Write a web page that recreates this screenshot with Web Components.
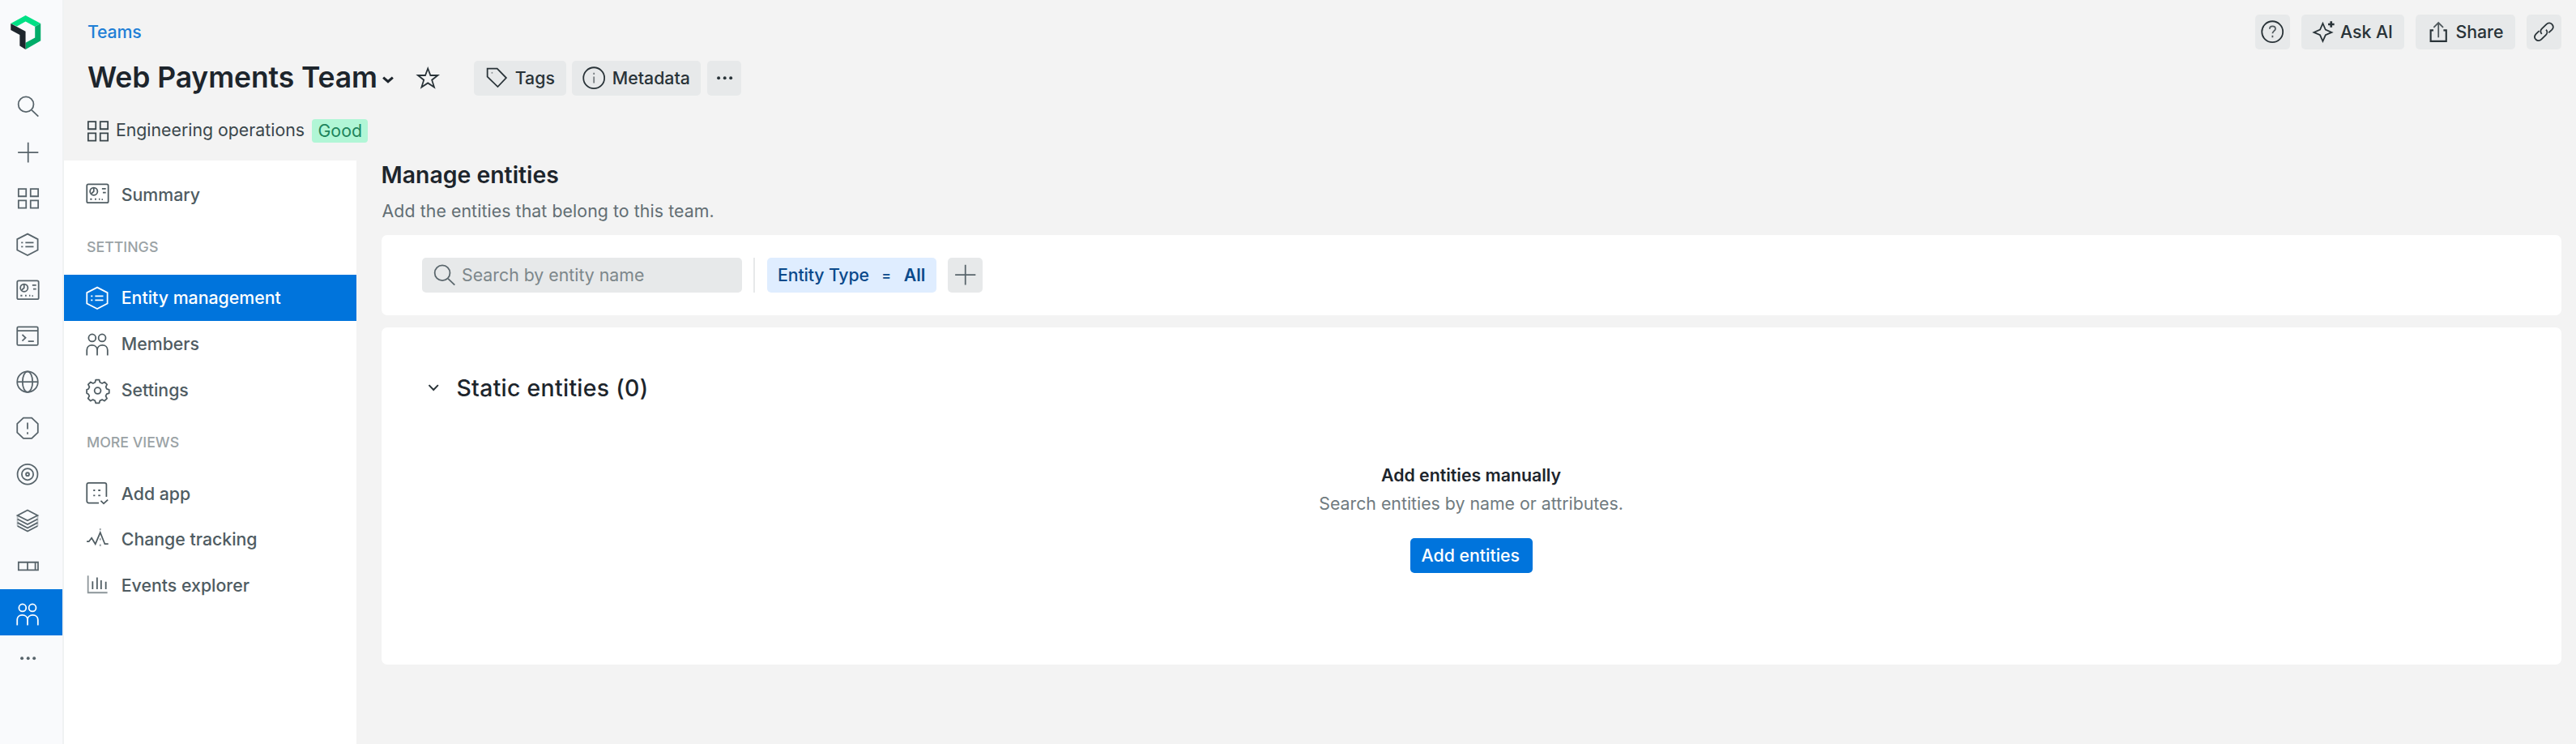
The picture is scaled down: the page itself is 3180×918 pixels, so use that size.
<!DOCTYPE html>
<html lang="en">
<head>
<meta charset="utf-8">
<title>Web Payments Team</title>
<style>
html,body{margin:0;height:100%}
body{font-family:Inter,"Liberation Sans",sans-serif;font-size:21.3px;color:#293338;background:#f3f3f3;overflow:hidden}
</style>
</head>
<body>
<team-app></team-app>
<script>
const ICONS={
logo:`<g stroke="none"><path fill="#00e085" d="M0 5.1 9.4 0l9.6 5.1-3.7 2-5.9-3.2-5.5 3.1z"/><path fill="#00ac69" d="M19 5.1v11L9.4 21.6v-4.3l6-3.2v-7z"/><path fill="#1d252c" d="M0 5.1v4.1l5.7 3.2v6.9l3.7 2.3V10.2z"/></g>`,
search:`<circle cx="6.8" cy="6.6" r="5.3"/><path d="m10.8 10.6 4.6 4.4"/>`,
plus:`<path d="M8.3 1v14M1.2 8h14.2"/>`,
grid:`<path d="M1.6 1.7h5.3v5.2H1.6zM10 1.7h5.3v5.2H10zM1.6 9.8h5.3V15H1.6zM10 9.8h5.3V15H10z"/>`,
hex:`<path d="M7.9.9.7 4.6v7.5l7.2 3.7 7.1-3.7V4.6zM6.4 7h5.7M6.4 9.8h5.7M3.5 7h1.2M3.5 9.8h1.2"/>`,
dash:`<rect x=".7" y="1.4" width="14.9" height="12.8" rx="1"/><circle cx="5.5" cy="6.3" r="2.6"/><path d="M5.5 3.7v2.6L3.7 8M11.2 4.5h2.7M11.8 7.1h2.1M3 11.7h1.2M6.2 11.7h1M9 11.7h.8M11 11.9h.8"/>`,
term:`<rect x=".7" y="1.3" width="14.4" height="12.7" rx=".8"/><path d="M.7 4h14.4M4.2 6.7l2.3 2.2-2.3 2.2M8.3 11.4h4"/>`,
globe:`<circle cx="7.9" cy="8" r="7.2"/><ellipse cx="7.9" cy="8" rx="3.5" ry="7.2"/><path d="M.7 8h14.4"/>`,
alert:`<path d="M5 .9h5.8L15.1 5v6l-4.3 4.2H5L.7 11V5zM7.9 4.2v4.6M7.9 10.8v1.5"/>`,
target:`<circle cx="7.9" cy="8" r="7"/><circle cx="7.9" cy="8" r="4"/><circle cx="7.9" cy="8" r="1.1"/>`,
layers:`<path d="m7.9.8 7 3.7-7 3.6-7-3.6zM.9 7l7 3.7L14.9 7M.9 9.5l7 3.7 7-3.7M.9 11.8l7 3.7 7-3.7"/><path d="M.9 4.5v7.3M14.9 4.5v7.3" stroke-opacity=".4"/>`,
book:`<path d="M1.6 5.5h13.6v5.4H1.6zM7.9 5.5v5.4M13.3 5.5v5.4"/>`,
people:`<circle cx="4.4" cy="3.9" r="2.5"/><circle cx="11.3" cy="3.9" r="2.5"/><path d="M.7 16v-3.6c0-2 1.4-3.4 3.5-3.4S7.9 10.4 7.9 12.4V16M7.9 12.4C7.9 10.4 9.4 9 11.5 9s3.6 1.4 3.6 3.4V16"/>`,
dots:`<g fill="currentColor" stroke="none"><circle cx="4" cy="8" r="1.1"/><circle cx="8.3" cy="8" r="1.1"/><circle cx="12.5" cy="8" r="1.1"/></g>`,
gear:`<path d="M6.9.9h2.4l.5 1.8 1.5.7 1.7-.9 1.7 1.7-.8 1.7.6 1.4 1.7.5v2.4l-1.7.6-.7 1.4.9 1.7-1.7 1.7-1.7-.9-1.5.7-.5 1.7H6.9l-.6-1.7-1.4-.7-1.7.9-1.7-1.7.9-1.7-.7-1.4L.6 10.2V7.8l1.2-.5.7-1.4-.9-1.7 1.7-1.7 1.7.9 1.4-.7z" stroke-linejoin="round"/><circle cx="8.2" cy="8.5" r="2.2"/>`,
app:`<path d="M9 15H2C1.2 15 .7 14.5.7 13.7V2.3C.7 1.5 1.2 1 2 1h11c.8 0 1.3.5 1.3 1.3v8.4M10.4 13.5l2 1.9 2.9-2.7"/><path d="M5.2 6.2h1.2M8.6 6.2h1.5M5.2 9.8h1.2M8.6 9.8h1.5"/>`,
change:`<path d="M.6 9.7h1.5L4 7.2l2.6 4.2 3.4-8 3.2 8h2.4"/><path d="M10 .6v1.2M10 7.5v1.2M10 11.5v1.4" stroke-opacity=".6"/>`,
bars:`<path d="M1.5 1.2v11.9h13.5" stroke-opacity=".65"/><path d="M4.7 5.2v5.5M7.8 2.5v8.2M10.6 4.5v6.2M13.9 5.5v5.2"/>`,
star:`<path d="m8 1.4 1.8 4.8h5.1l-4.1 3.2 1.6 5L8 11.5l-4.4 2.9 1.6-5L1.1 6.2h5.1z"/>`,
tag:`<path d="M1.5 1.5h6.8l6.3 6.4-5.9 6.2-7.2-7z"/><path d="M4.3 4.4h.9" stroke-opacity=".5"/>`,
info:`<circle cx="8" cy="8" r="7.3"/><path d="M8 7v4.6M8 4.3v1.3" stroke-opacity=".6"/>`,
help:`<circle cx="8" cy="8" r="7.3"/><path d="M6.1 6.1c0-1.2.8-1.9 2-1.9s2 .7 2 1.8c0 1.3-2 1.5-2 3.2M8.1 10.6v1.4" stroke-opacity=".8"/>`,
spark:`<path d="m7 2.2 1.9 4.3 4.3 1.9-4.3 1.9L7 14.6l-1.9-4.3L.8 8.4l4.3-1.9z"/><path stroke-width="1.5" d="M12.8.7v4.2M10.7 2.8H15"/>`,
share:`<path stroke-width="1.2" d="M4.5 7H2.6v7.6h10.8V7h-1.9"/><path d="M8 12V1.8M4.7 5 8 1.7 11.3 5" stroke-opacity=".8"/>`,
link:`<path d="M6.6 9.6c-1-1.2-.9-2.7.1-3.7l3.2-3.1c1.1-1.1 2.7-1.1 3.8-.1 1 1.1 1 2.7 0 3.8l-2.3 2.2M9.6 6.5c1 1.1.9 2.7-.1 3.7l-3.2 3.1c-1.1 1.1-2.7 1.1-3.8.1-1-1.1-1-2.7 0-3.8l2.3-2.2"/>`,
caret:`<path stroke-width="2" d="m4.1 5.700 3.900 3.400L11.900 5.700"/>`,
chevron:`<path stroke-width="1.1" d="m4.8 6.300 3.200 3.300 3.200-3.300"/>`
};
function define(name,css,html){
  customElements.define(name,class extends HTMLElement{
    constructor(){super();const t=document.createElement('template');
      t.innerHTML=`<style>*{box-sizing:border-box}${css}</style>${html}`;
      this.attachShadow({mode:'open'}).append(t.content.cloneNode(true));}
  });
}
customElements.define('ui-icon',class extends HTMLElement{
  connectedCallback(){
    if(this.shadowRoot)return;
    const n=this.getAttribute('name');
    this.attachShadow({mode:'open'}).innerHTML=`<style>:host{display:block;flex:none;width:28.4px;height:28.4px}svg{display:block;width:100%;height:100%;overflow:visible}</style><svg viewBox="${n==='logo'?'0 0 19 21.6':'0 0 16 16'}" fill="none" stroke="currentColor" stroke-width="1">${ICONS[n]}</svg>`;
  }
});
define('rail-item',`:host{display:flex;align-items:center;height:56.77px;padding-left:19.5px;color:#58646b}:host([active]){background:#0074dc;color:#fff}:host([active]) ::slotted(*){margin-top:3px}`,`<slot></slot>`);
define('app-rail',`:host{display:block;width:79px;flex:none;background:#f9fafc;border-right:2.5px solid #f0f2f3;box-sizing:border-box}.logo{width:37.5px;height:42px;margin:18.5px 0 42.1px 13px}`,
`<ui-icon class="logo" name="logo"></ui-icon>${['search','plus','grid','hex','dash','term','globe','alert','target','layers','book'].map(n=>`<rail-item><ui-icon name="${n}"></ui-icon></rail-item>`).join('')}<rail-item active><ui-icon name="people"></ui-icon></rail-item><rail-item><ui-icon name="dots"></ui-icon></rail-item>`);
define('ui-button',`:host{display:flex;align-items:center;box-sizing:border-box;height:42.5px;border-radius:5px;background:#e7e9ea;color:#293338;font-weight:500;white-space:nowrap;padding-left:14px;gap:8.5px}:host([square]){width:42.5px;padding:0;justify-content:center}:host([primary]){background:#0074dc;color:#fff}`,`<slot name="icon"></slot><slot></slot>`);
define('nav-item',`:host{display:flex;align-items:center;height:56.77px;padding:0 0 1px 27px;box-sizing:border-box;gap:15.4px;font-weight:500;color:#4f5c62;white-space:nowrap}:host([active]){background:#0074dc;color:#fff}`,`<slot name="icon"></slot><slot></slot>`);
define('nav-heading',`:host{display:flex;align-items:center;height:71px;padding:1px 0 0 28px;box-sizing:border-box;font-size:17.75px;font-weight:500;color:#9aa2a5;white-space:nowrap}`,`<slot></slot>`);
define('side-nav',`:host{display:block;width:361.3px;flex:none;background:#fff;padding-top:14.2px;box-sizing:border-box}`,
`<nav-item><ui-icon slot="icon" name="dash"></ui-icon>Summary</nav-item>
<nav-heading>SETTINGS</nav-heading>
<nav-item active><ui-icon slot="icon" name="hex"></ui-icon>Entity management</nav-item>
<nav-item><ui-icon slot="icon" name="people"></ui-icon>Members</nav-item>
<nav-item><ui-icon slot="icon" name="gear"></ui-icon>Settings</nav-item>
<nav-heading>MORE VIEWS</nav-heading>
<nav-item><ui-icon slot="icon" name="app"></ui-icon>Add app</nav-item>
<nav-item><ui-icon slot="icon" name="change"></ui-icon>Change tracking</nav-item>
<nav-item><ui-icon slot="icon" name="bars"></ui-icon>Events explorer</nav-item>`);
define('status-badge',`:host{display:flex;align-items:center;justify-content:center;box-sizing:border-box;width:68.5px;height:28.4px;border-radius:4px;background:#b1f6d6;color:#20845c}`,`<slot></slot>`);
define('page-header',`:host{display:flex;justify-content:space-between;height:197.5px;box-sizing:border-box;padding:18px 18.5px 0 29px;flex:none}
.crumb{height:43px;line-height:43px;color:#1f7fd6;font-weight:500;letter-spacing:-.2px}
.title,.meta,.right{display:flex;align-items:center}
.title{height:42.5px;margin-top:14px}h1{margin:-1px 0 0;font-size:35.5px;font-weight:600;color:#1d252c;line-height:42px;white-space:nowrap;letter-spacing:-.09px}
.caret{width:24px;height:24px;margin:5px 0 0 1.5px;color:#1d252c}.star{margin:0 42.5px 0 23px}
.tags{width:114px;margin-right:6.5px;gap:8px}.md{width:159.5px;margin-right:7.5px;padding-left:13px}
.meta{margin-top:23px;height:42px;color:#3a464b}.meta ui-icon{margin-left:-1.7px}.meta span{margin:-3px 9.5px 0 8.2px;white-space:nowrap}
.right{height:42.5px;gap:14px}.ask{width:127.5px;gap:6px}.share{width:123px;gap:7px}`,
`<div><div class="crumb"><span>Teams</span></div>
<div class="title"><h1>Web Payments Team</h1><ui-icon class="caret" name="caret"></ui-icon><ui-icon class="star" name="star"></ui-icon>
<ui-button class="tags"><ui-icon slot="icon" name="tag"></ui-icon>Tags</ui-button><ui-button class="md"><ui-icon slot="icon" name="info"></ui-icon>Metadata</ui-button><ui-button square><ui-icon slot="icon" name="dots"></ui-icon></ui-button></div>
<div class="meta"><ui-icon name="grid"></ui-icon><span>Engineering operations</span><status-badge>Good</status-badge></div></div>
<div class="right"><ui-button square><ui-icon slot="icon" name="help"></ui-icon></ui-button><ui-button class="ask"><ui-icon slot="icon" name="spark"></ui-icon>Ask AI</ui-button><ui-button class="share"><ui-icon slot="icon" name="share"></ui-icon>Share</ui-button><ui-button square><ui-icon slot="icon" name="link"></ui-icon></ui-button></div>`);
define('ui-card',`:host{display:block;box-sizing:border-box;background:#fff;border-radius:7px}`,`<slot></slot>`);
define('search-field',`:host{display:flex;align-items:center;box-sizing:border-box;width:395px;height:42.5px;border-radius:5px;background:#e7e9ea;padding-left:13.5px;gap:7.6px;color:#7d878b}ui-icon{color:#5a666c}`,`<ui-icon name="search"></ui-icon><span>Search by entity name</span>`);
define('filter-chip',`:host{display:flex;align-items:center;box-sizing:border-box;width:209.5px;height:42.5px;border-radius:5px;background:#dfedff;padding-left:13.5px;color:#0b4a8b;white-space:nowrap;font-weight:500}.k{letter-spacing:-.15px}.op{margin:0 15.5px;font-size:17.75px}.v{font-weight:600}`,`<span class="k">Entity Type</span><span class="op">=</span><span class="v">All</span>`);
define('empty-state',`:host{display:flex;flex-direction:column;align-items:center}b{font-weight:600;color:#1d252c;line-height:28.4px}p{margin:7px 0 0;line-height:28.4px;color:#707b80}ui-button{width:151px;margin-top:28.5px}`,`<b>Add entities manually</b><p>Search entities by name or attributes.</p><ui-button primary>Add entities</ui-button>`);
define('entity-manager',`:host{display:block;flex:1;padding:.5px 18.5px 0 30.3px;box-sizing:border-box}
h2,h3{margin:0;font-size:28.4px;font-weight:600;color:#1d252c;line-height:36px;white-space:nowrap}h3{font-weight:500;letter-spacing:.3px}
p{margin:12.1px 0 0 1px;line-height:28.4px;color:#626e73;letter-spacing:.08px}
.filters{display:flex;align-items:center;height:98.5px;padding-left:50px;margin-top:15.5px}.sep{width:2px;height:42.5px;background:#e7e9ea;margin:0 14.5px}
.list{height:415.5px;margin-top:15.5px;padding-top:56.5px}.head{display:flex;align-items:center;padding-left:50px;gap:14.5px}.add{margin-left:14px;color:#58646b}empty-state{margin-top:75.2px}`,
`<h2>Manage entities</h2><p>Add the entities that belong to this team.</p>
<ui-card class="filters"><search-field></search-field><div class="sep"></div><filter-chip></filter-chip><ui-button class="add" square><ui-icon slot="icon" name="plus"></ui-icon></ui-button></ui-card>
<ui-card class="list"><div class="head"><ui-icon name="chevron"></ui-icon><h3>Static entities (0)</h3></div><empty-state></empty-state></ui-card>`);
define('team-app',`:host{display:flex;height:918px}.main{flex:1;display:flex;flex-direction:column;min-width:0}.body{display:flex;flex:1}`,
`<app-rail></app-rail><div class="main"><page-header></page-header><div class="body"><side-nav></side-nav><entity-manager></entity-manager></div></div>`);
</script>
</body>
</html>
